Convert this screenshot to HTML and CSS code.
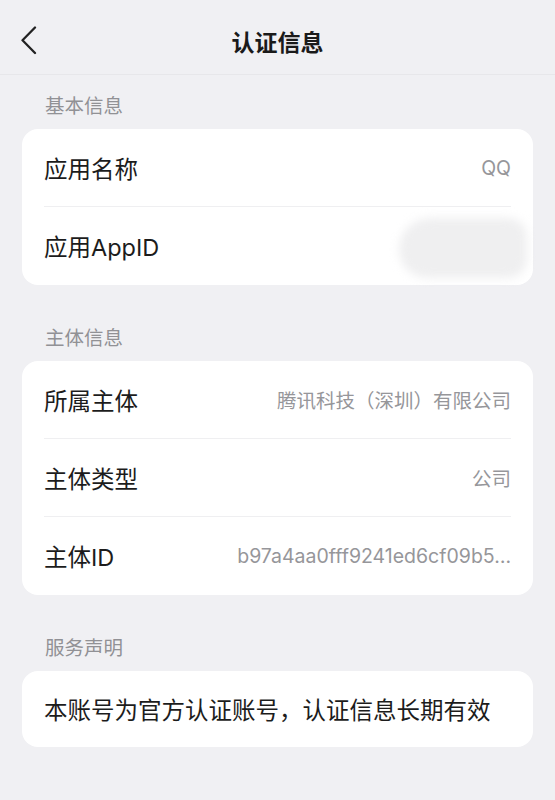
FILE: index.html
```html
<!DOCTYPE html>
<html lang="zh-CN">
<head>
<meta charset="utf-8">
<title>认证信息</title>
<link rel="stylesheet" href="styles.css">
</head>
<body>
<header class="header">
  <button class="back" aria-label="返回">
    <svg width="18" height="30" viewBox="0 0 18 30" fill="none" stroke="#222" stroke-width="2.3" stroke-linecap="round" stroke-linejoin="round"><polyline points="15,1.5 2.5,14.3 15,27"/></svg>
  </button>
  <h1 class="title">认证信息</h1>
  <span class="spacer"></span>
</header>
<main class="content">
  <section class="section first">
    <div class="section-label">基本信息</div>
    <div class="card">
      <div class="row"><span class="label">应用名称</span><span class="value">QQ</span></div>
      <div class="row"><span class="label">应用AppID</span><span class="redact"></span></div>
    </div>
  </section>
  <section class="section">
    <div class="section-label">主体信息</div>
    <div class="card">
      <div class="row"><span class="label">所属主体</span><span class="value">腾讯科技（深圳）有限公司</span></div>
      <div class="row"><span class="label">主体类型</span><span class="value">公司</span></div>
      <div class="row"><span class="label">主体ID</span><span class="value">b97a4aa0fff9241ed6cf09b5…</span></div>
    </div>
  </section>
  <section class="section">
    <div class="section-label">服务声明</div>
    <div class="card">
      <div class="statement">本账号为官方认证账号，认证信息长期有效</div>
    </div>
  </section>
</main>
</body>
</html>
```
FILE: styles.css
```css
* { box-sizing: border-box; }
html, body { margin: 0; padding: 0; }
body {
  background: #f0f0f3;
  font-family: "Inter", "Noto Sans CJK SC", sans-serif;
  color: #1c1c1c;
  width: 555px;
  min-height: 800px;
}
.header {
  height: 75px;
  padding-top: 8px;
  border-bottom: 1px solid #e7e7ea;
  display: grid;
  grid-template-columns: 60px 1fr 60px;
  align-items: center;
}
.back {
  border: 0;
  background: none;
  padding: 0 0 0 20px;
  display: flex;
  align-items: center;
  height: 30px;
  margin-top: -1px;
}
.title {
  margin: 0;
  text-align: center;
  font-size: 23px;
  font-weight: 600;
  line-height: 30px;
  color: #1a1a1a;
  font-family: "Noto Sans CJK SC", sans-serif;
}
.content { padding: 0 22px; }
.section-label {
  padding: 40px 23px 0;
  line-height: 24px;
  margin-bottom: 12px;
  font-size: 19.5px;
  color: #919195;
  font-family: "Noto Sans CJK SC", sans-serif;
}
.section.first .section-label { padding-top: 18px; }
.card {
  background: #fff;
  border-radius: 16px;
  padding: 0 22px;
}
.row {
  height: 78px;
  display: flex;
  align-items: center;
  justify-content: space-between;
  border-bottom: 1px solid #efeff1;
}
.row:last-child { border-bottom: 0; }
.label {
  font-size: 23.5px;
  color: #1c1c1c;
}
.value {
  font-size: 19.5px;
  color: #96969a;
  white-space: nowrap;
}
.redact {
  width: 128px;
  height: 60px;
  margin-right: -16px;
  margin-top: 4px;
  background: #efeff0;
  border-radius: 40px 24px 24px 36px;
  filter: blur(5px);
}
.statement {
  height: 76px;
  display: flex;
  align-items: center;
  font-size: 23.5px;
  color: #1c1c1c;
  font-family: "Noto Sans CJK SC", sans-serif;
}
```
